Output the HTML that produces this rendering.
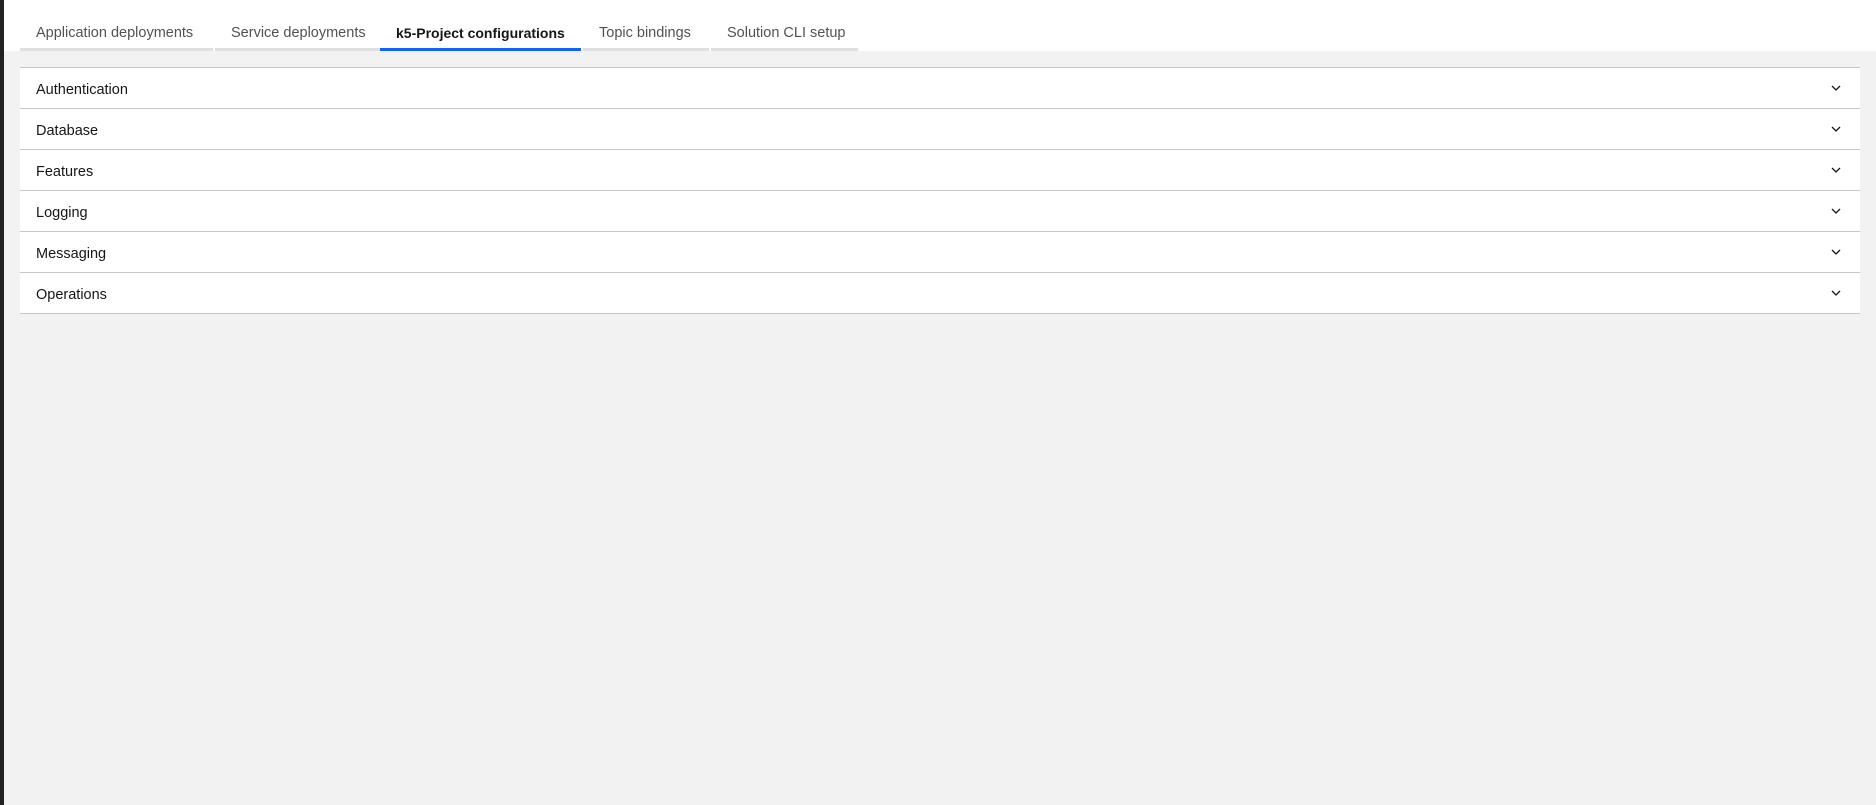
<!DOCTYPE html>
<html><head><style>
body{margin:0;width:1876px;height:805px;background:#f2f2f2;font-family:"Liberation Sans",sans-serif;position:relative;overflow:hidden}
.strip{position:absolute;left:0;top:0;width:4px;height:805px;background:#222}
.head{position:absolute;left:4px;top:0;right:0;height:51px;background:#fff}
.tab{position:absolute;top:0;border-bottom:3px solid #e0e0e0;font-size:14.5px;color:#525252;line-height:66px;padding-left:16px;box-sizing:border-box;height:51px;white-space:nowrap}
.tab.a{border-bottom-color:#0f62fe;color:#161616;font-weight:bold;font-size:14px}
.acc{position:absolute;left:20px;width:1840px;top:67px;background:#fff;border-top:1px solid #c6c6c6}
.row{height:40px;border-bottom:1px solid #c6c6c6;position:relative;font-size:14.5px;color:#161616;line-height:44px;padding-left:16px}
.row svg{position:absolute;right:18px;top:14px}
</style></head><body>
<div class="strip"></div>
<div class="head">
<div class="tab" style="left:16px;width:193px">Application deployments</div>
<div class="tab" style="left:211px;width:165px">Service deployments</div>
<div class="tab a" style="left:376px;width:201px">k5-Project configurations</div>
<div class="tab" style="left:579px;width:126px">Topic bindings</div>
<div class="tab" style="left:707px;width:147px">Solution CLI setup</div>
</div>
<div class="acc">
<div class="row">Authentication<svg width="12" height="12" viewBox="0 0 12 12"><path d="M2 4l4 4 4-4" fill="none" stroke="#161616" stroke-width="1.3"/></svg></div>
<div class="row">Database<svg width="12" height="12" viewBox="0 0 12 12"><path d="M2 4l4 4 4-4" fill="none" stroke="#161616" stroke-width="1.3"/></svg></div>
<div class="row">Features<svg width="12" height="12" viewBox="0 0 12 12"><path d="M2 4l4 4 4-4" fill="none" stroke="#161616" stroke-width="1.3"/></svg></div>
<div class="row">Logging<svg width="12" height="12" viewBox="0 0 12 12"><path d="M2 4l4 4 4-4" fill="none" stroke="#161616" stroke-width="1.3"/></svg></div>
<div class="row">Messaging<svg width="12" height="12" viewBox="0 0 12 12"><path d="M2 4l4 4 4-4" fill="none" stroke="#161616" stroke-width="1.3"/></svg></div>
<div class="row">Operations<svg width="12" height="12" viewBox="0 0 12 12"><path d="M2 4l4 4 4-4" fill="none" stroke="#161616" stroke-width="1.3"/></svg></div>
</div>
</body></html>
